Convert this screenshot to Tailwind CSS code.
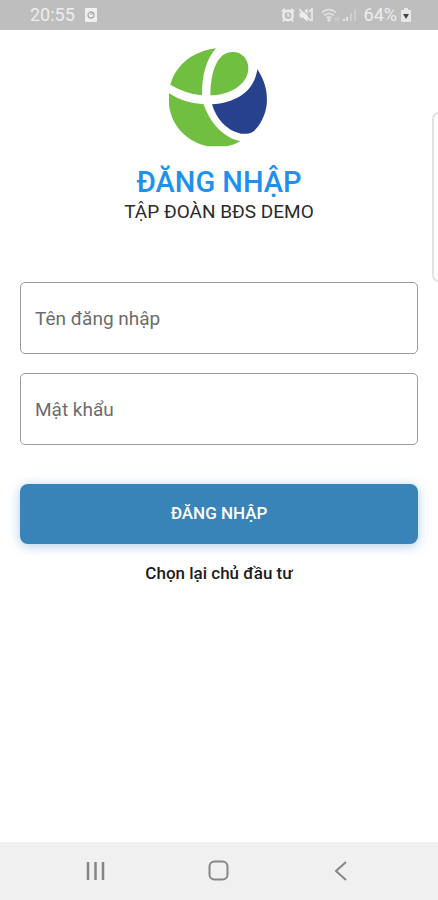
<!DOCTYPE html>
<html lang="vi">
<head>
  <meta charset="UTF-8" />
  <meta name="viewport" content="width=device-width, initial-scale=1.0"/>
  <title>Đăng nhập</title>

  <!-- Tailwind CSS CDN -->
  <script src="https://cdn.jsdelivr.net/npm/@tailwindcss/browser@4"></script>
</head>

<body class="relative min-h-screen flex flex-col bg-white font-['Roboto',sans-serif] overflow-x-hidden">

  <!-- Status bar -->
  <header class="flex items-center justify-between h-[30px] pl-[30px] pr-[27px] bg-[#bebebe] text-[#ededed] text-lg leading-none">
    <div class="flex items-center gap-[10px]">
      <span>20:55</span>
      <svg class="w-3 h-[14px]" viewBox="0 0 12 14" fill="none">
        <rect width="12" height="14" rx="1" fill="#f0f0f0"/>
        <circle cx="6" cy="7" r="3" stroke="#aaa" stroke-width="1.3"/>
        <path d="M6 5.5V7l2-2" stroke="#aaa"/>
      </svg>
    </div>
    <div class="flex items-center gap-1">
      <!-- Alarm -->
      <svg class="w-[14px] h-[14px]" viewBox="0 0 14 14" fill="none" stroke="#ededed">
        <path d="M1 3.5 4 1M13 3.5 10 1M3 12l-1 1.5M11 12l1 1.5" stroke-width="2"/>
        <circle cx="7" cy="7.5" r="4.8" stroke-width="2.4"/>
        <path d="M7 5v3h2" stroke-width="1.2"/>
      </svg>
      <!-- Muted -->
      <svg class="w-[14px] h-[14px]" viewBox="0 0 14 14" fill="none" stroke="#ededed">
        <path d="M1 5h3l4-4v12L4 9H1z" fill="#ededed"/>
        <path d="m2 0 12 12" stroke="#bebebe" stroke-width="1.2"/>
        <path d="m0 1 12 12M10 4l3-3v12" stroke-width="1.6"/>
      </svg>
      <!-- Wi-Fi -->
      <svg class="w-[18px] h-[14px] ml-1" viewBox="0 0 18 14" fill="none" stroke="#e4e4e4" stroke-width="1.5">
        <path d="M1 4.5q7-6 14 0M3 7.5q5-4 10 0M5.500 10q2.500-2 5 0"/>
        <circle cx="8" cy="12" r="1" fill="#e4e4e4"/>
        <path d="M15 9v4m2-4v4" stroke="#d4d4d4" stroke-width="1"/>
      </svg>
      <!-- Signal -->
      <svg class="w-[13px] h-[14px]" viewBox="0 0 13 14" fill="none" stroke-width="2">
        <path d="M1 11v2M4 9v4" stroke="#e4e4e4"/>
        <path d="M8 5v8M12 2v11" stroke="#cecece"/>
      </svg>
      <span class="ml-1">64%</span>
      <!-- Battery -->
      <svg class="w-[10px] h-[14px]" viewBox="0 0 10 14">
        <path d="M3 0h4v2h2q1 0 1 1v10q0 1-1 1H1q-1 0-1-1V3q0-1 1-1h2z" fill="#e8e8e8"/>
        <path d="M2 6h6L5 11z" fill="#444"/>
      </svg>
    </div>
  </header>

  <!-- Login -->
  <main class="flex-1 flex flex-col items-center px-5 pt-[18px]">
    <svg class="w-[100px] h-[100px]" viewBox="34 30 300 300" role="img" aria-label="Logo">
      <g fill="#70bf40">
        <path d="M175 31C105 40 55 80 38 140Q85 168 133 172C133 110 145 65 175 31Z"/>
        <path d="M158 172C158 110 175 42 225 42C255 42 272 65 272 92C270 135 225 170 158 172Z"/>
        <path d="M34 166Q80 196 138 199C155 250 195 300 248 309Q225 325 195 325L150 325C80 310 25 250 34 166Z"/>
      </g>
      <path d="M299 94C320 125 331 160 327 200C323 232 308 260 290 278Q275 290 250 287C205 278 175 240 163 199C235 195 290 160 299 94Z" fill="#28418c"/>
    </svg>

    <h1 class="mt-4 text-[29px] leading-9 font-medium text-[#1e90ee]">ĐĂNG NHẬP</h1>
    <p class="text-[19px] leading-6 text-[#2b2b2b]">TẬP ĐOÀN BĐS DEMO</p>

    <form class="w-full mt-[58px] flex flex-col">
      <input type="text" aria-label="Tên đăng nhập" placeholder="Tên đăng nhập" class="w-full h-[72px] px-[14px] rounded-[5px] border border-[#9c9c9c] text-[19px] text-[#333333] placeholder:text-[#6c6c6c]" />
      <input type="password" aria-label="Mật khẩu" placeholder="Mật khẩu" class="w-full h-[72px] mt-[19px] px-[14px] rounded-[5px] border border-[#9c9c9c] text-[19px] text-[#333333] placeholder:text-[#6c6c6c]" />
      <button type="submit" class="w-full h-[60px] mt-[39px] rounded-lg bg-[#3884b9] text-white text-[17px] font-medium shadow-[0_2px_12px_rgba(56,132,205,0.4)]">ĐĂNG NHẬP</button>
    </form>

    <a href="#" class="mt-[17px] text-[17px] leading-6 font-medium text-[#1c1c1c]">Chọn lại chủ đầu tư</a>
  </main>

  <!-- Edge panel handle -->
  <div class="absolute top-[112px] -right-2 w-[14px] h-[170px] rounded-lg border-2 border-[#e2e2e2] bg-white"></div>

  <!-- Navigation bar -->
  <nav class="flex items-center justify-between h-[58px] px-[84px] bg-[#f0f0f0]">
    <button type="button" aria-label="Recents">
      <svg class="w-6 h-6" viewBox="0 0 24 24" fill="none" stroke="#858585" stroke-width="2.500">
        <path d="M4 3v18M11.500 3v18M19 3v18"/>
      </svg>
    </button>
    <button type="button" aria-label="Home">
      <svg class="w-6 h-6" viewBox="0 0 24 24" fill="none" stroke="#858585" stroke-width="2">
        <rect x="2.500" y="2.500" width="18" height="18" rx="5"/>
      </svg>
    </button>
    <button type="button" aria-label="Back">
      <svg class="w-6 h-6" viewBox="0 0 24 24" fill="none" stroke="#858585" stroke-width="2">
        <path d="m16 3-10 9 10 9"/>
      </svg>
    </button>
  </nav>

</body>
</html>
